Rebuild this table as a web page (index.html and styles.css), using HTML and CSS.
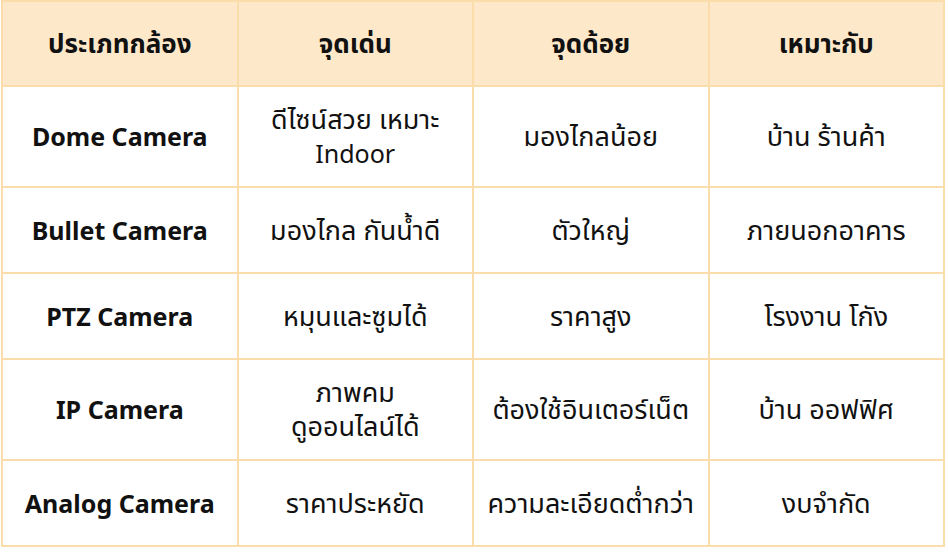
FILE: index.html
```html
<!DOCTYPE html>
<html lang="th">
<head>
<meta charset="utf-8">
<link rel="stylesheet" href="styles.css">
</head>
<body>
<table class="cams">
  <thead>
    <tr>
      <th>ประเภทกล้อง</th>
      <th>จุดเด่น</th>
      <th>จุดด้อย</th>
      <th>เหมาะกับ</th>
    </tr>
  </thead>
  <tbody>
    <tr class="tall">
      <td class="name">Dome Camera</td>
      <td>ดีไซน์สวย เหมาะ<br><span class="latin">Indoor</span></td>
      <td>มองไกลน้อย</td>
      <td>บ้าน ร้านค้า</td>
    </tr>
    <tr>
      <td class="name">Bullet Camera</td>
      <td>มองไกล กันน้ำดี</td>
      <td>ตัวใหญ่</td>
      <td>ภายนอกอาคาร</td>
    </tr>
    <tr>
      <td class="name">PTZ Camera</td>
      <td>หมุนและซูมได้</td>
      <td>ราคาสูง</td>
      <td>โรงงาน โกัง</td>
    </tr>
    <tr class="tall">
      <td class="name">IP Camera</td>
      <td>ภาพคม<br>ดูออนไลน์ได้</td>
      <td>ต้องใช้อินเตอร์เน็ต</td>
      <td>บ้าน ออฟฟิศ</td>
    </tr>
    <tr>
      <td class="name">Analog Camera</td>
      <td>ราคาประหยัด</td>
      <td>ความละเอียดต่ำกว่า</td>
      <td>งบจำกัด</td>
    </tr>
  </tbody>
</table>
</body>
</html>
```

FILE: styles.css
```css
html, body {
  margin: 0;
  padding: 0;
  background: #ffffff;
}

body {
  font-family: "Noto Sans", "Noto Sans Thai", "DejaVu Sans", sans-serif;
  color: #111111;
}

.cams {
  margin: 0 0 0 1px;
  width: 944px;
  table-layout: fixed;
  border-collapse: collapse;
  border: 2px solid #fbdcab;
}

.cams th,
.cams td {
  border: 2px solid #fbdcab;
  text-align: center;
  vertical-align: middle;
  font-size: 27px;
  line-height: 34px;
  padding: 15px 4px 16px;
}

.cams th {
  height: 52px;
  background: #fde8c9;
  font-weight: 700;
  font-size: 26px;
}

.cams td {
  height: 53px;
}

.cams .name {
  font-weight: 700;
  font-size: 25px;
}

.cams .latin {
  font-size: 25px;
}
```
